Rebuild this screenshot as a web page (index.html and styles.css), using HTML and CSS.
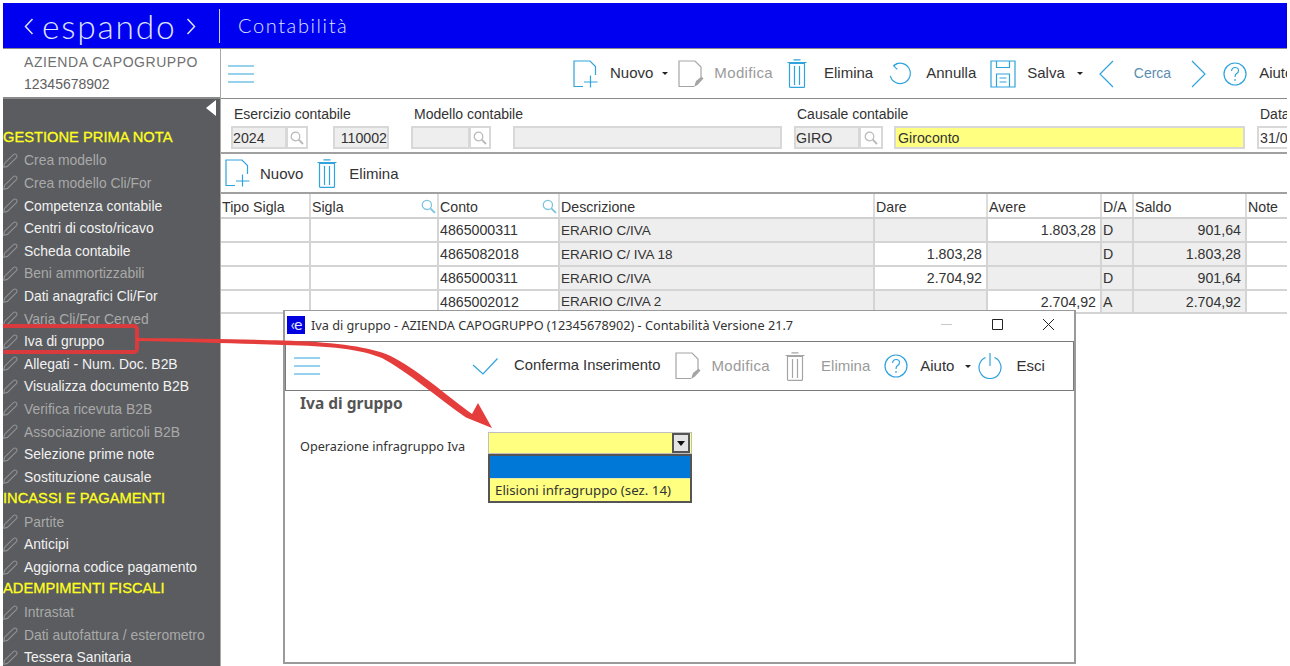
FILE: index.html
```html
<!DOCTYPE html>
<html lang="it">
<head>
<meta charset="utf-8">
<title>Contabilità</title>
<link rel="stylesheet" href="styles.css">
</head>
<body>
<svg class="defs" width="0" height="0">
  <symbol id="i-pencil" viewBox="0 0 15 15"><path d="M.8 14.2 L1.4 10.4 L10.4 1.6 Q12 .4 13.4 1.6 Q14.6 3 13.4 4.6 L4.4 13.4 Z" fill="none" stroke="currentColor" stroke-width="1.1"/></symbol>
  <symbol id="i-new" viewBox="0 0 26 28"><path d="M10 26.5 H1 V1 H17 L22.5 6.5 V15" fill="none" stroke="currentColor" stroke-width="1.2"/><path d="M17.5 15.5 V27.5 M11 22 H24.5" fill="none" stroke="currentColor" stroke-width="1.2"/></symbol>
  <symbol id="i-edit" viewBox="0 0 26 28"><path d="M16 26.5 H1 V1 H17 L23 7 V17" fill="none" stroke="currentColor" stroke-width="1.2"/><path d="M16 27 L18 21 L23.5 16.5 L25.5 18.5 L20 24.5 Z" fill="currentColor"/></symbol>
  <symbol id="i-trash" viewBox="0 0 20 29"><path d="M2.5 4.5 H17.5 V27.5 Q17.5 28.4 16.5 28.4 H3.5 Q2.5 28.4 2.5 27.5 Z M7.5 7 V26 M12.5 7 V26 M.5 3.5 H19.5 M6.5 .8 H13.5" fill="none" stroke="currentColor" stroke-width="1.2"/></symbol>
  <symbol id="i-undo" viewBox="0 0 26 26"><path d="M6 4 A11 11 0 1 1 2.5 15" fill="none" stroke="currentColor" stroke-width="1.3"/><path d="M6 4 L11 1 M6 4 L10 8" fill="none" stroke="currentColor" stroke-width="1.3"/></symbol>
  <symbol id="i-save" viewBox="0 0 26 28"><path d="M1 1 H25 V27 H1 Z M6.5 1 V7.5 H19.5 V1 M6.5 27 V14 H19.5 V27 M9.5 18 H16.5 M9.5 22 H16.5" fill="none" stroke="currentColor" stroke-width="1.2"/></symbol>
  <symbol id="i-prev" viewBox="0 0 18 28"><path d="M16 1 L3 14 L16 27" fill="none" stroke="currentColor" stroke-width="1.2"/></symbol>
  <symbol id="i-next" viewBox="0 0 18 28"><path d="M3 1 L16 14 L3 27" fill="none" stroke="currentColor" stroke-width="1.2"/></symbol>
  <symbol id="i-help" viewBox="0 0 24 24"><circle cx="12" cy="12" r="11" fill="none" stroke="currentColor" stroke-width="1.2"/><path d="M8.5 9 Q9 5.5 12 5.5 Q15.5 5.5 15.5 8.5 Q15.5 10.5 13.5 11.5 Q12 12.5 12 15" fill="none" stroke="currentColor" stroke-width="1.2"/><path d="M12 17 V19" stroke="currentColor" stroke-width="1.2"/></symbol>
  <symbol id="i-power" viewBox="0 0 24 26"><path d="M7.5 4.5 A11 11 0 1 0 16.5 4.5" fill="none" stroke="currentColor" stroke-width="1.2"/><path d="M12 0 V13" stroke="currentColor" stroke-width="1.2"/></symbol>
  <symbol id="i-check" viewBox="0 0 26 17"><path d="M1 7 L11 16 L25.5 .5" fill="none" stroke="currentColor" stroke-width="1.2"/></symbol>
  <symbol id="i-menu" viewBox="0 0 26 18"><path d="M0 1 H26 M0 9 H26 M0 17 H26" stroke="currentColor" stroke-width="1.1"/></symbol>
  <symbol id="i-search" viewBox="0 0 14 14"><circle cx="5.5" cy="5.5" r="4.3" fill="none" stroke="currentColor" stroke-width="1.2"/><path d="M8.7 8.7 L13 13" stroke="currentColor" stroke-width="1.8"/></symbol>
  <symbol id="i-logo-l" viewBox="0 0 10 17"><path d="M8.5 1 L1.5 8.5 L8.5 16" fill="none" stroke="currentColor" stroke-width="1.5"/></symbol>
  <symbol id="i-logo-r" viewBox="0 0 10 17"><path d="M1.5 1 L8.5 8.5 L1.5 16" fill="none" stroke="currentColor" stroke-width="1.5"/></symbol>
</svg>

<div class="app">
  <header class="topbar">
    <div class="brand"><svg class="chev"><use href="#i-logo-l"/></svg><span class="word">espando</span><svg class="chev"><use href="#i-logo-r"/></svg></div>
    <div class="module">Contabilità</div>
  </header>

  <div class="workspace">
    <aside class="side">
      <div class="company">
        <div class="company-name">AZIENDA CAPOGRUPPO</div>
        <div class="company-id">12345678902</div>
      </div>
      <nav class="menu">
        <span class="collapse"></span>
        <div class="menu-head">GESTIONE PRIMA NOTA</div>
        <a class="item off"><svg class="pen"><use href="#i-pencil"/></svg>Crea modello</a>
        <a class="item off"><svg class="pen"><use href="#i-pencil"/></svg>Crea modello Cli/For</a>
        <a class="item"><svg class="pen"><use href="#i-pencil"/></svg>Competenza contabile</a>
        <a class="item"><svg class="pen"><use href="#i-pencil"/></svg>Centri di costo/ricavo</a>
        <a class="item"><svg class="pen"><use href="#i-pencil"/></svg>Scheda contabile</a>
        <a class="item off"><svg class="pen"><use href="#i-pencil"/></svg>Beni ammortizzabili</a>
        <a class="item"><svg class="pen"><use href="#i-pencil"/></svg>Dati anagrafici Cli/For</a>
        <a class="item off"><svg class="pen"><use href="#i-pencil"/></svg>Varia Cli/For Cerved</a>
        <a class="item"><svg class="pen"><use href="#i-pencil"/></svg>Iva di gruppo</a>
        <a class="item"><svg class="pen"><use href="#i-pencil"/></svg>Allegati - Num. Doc. B2B</a>
        <a class="item"><svg class="pen"><use href="#i-pencil"/></svg>Visualizza documento B2B</a>
        <a class="item off"><svg class="pen"><use href="#i-pencil"/></svg>Verifica ricevuta B2B</a>
        <a class="item off"><svg class="pen"><use href="#i-pencil"/></svg>Associazione articoli B2B</a>
        <a class="item"><svg class="pen"><use href="#i-pencil"/></svg>Selezione prime note</a>
        <a class="item"><svg class="pen"><use href="#i-pencil"/></svg>Sostituzione causale</a>
        <div class="menu-head">INCASSI E PAGAMENTI</div>
        <a class="item off"><svg class="pen"><use href="#i-pencil"/></svg>Partite</a>
        <a class="item"><svg class="pen"><use href="#i-pencil"/></svg>Anticipi</a>
        <a class="item"><svg class="pen"><use href="#i-pencil"/></svg>Aggiorna codice pagamento</a>
        <div class="menu-head">ADEMPIMENTI FISCALI</div>
        <a class="item off"><svg class="pen"><use href="#i-pencil"/></svg>Intrastat</a>
        <a class="item off"><svg class="pen"><use href="#i-pencil"/></svg>Dati autofattura / esterometro</a>
        <a class="item"><svg class="pen"><use href="#i-pencil"/></svg>Tessera Sanitaria</a>
      </nav>
    </aside>

    <main class="main">
      <div class="toolbar">
        <svg class="ic ic-menu"><use href="#i-menu"/></svg>
        <div class="tools">
          <svg class="ic ic-new"><use href="#i-new"/></svg><span class="t t-nuovo">Nuovo</span><span class="caret"></span>
          <svg class="ic ic-edit dis"><use href="#i-edit"/></svg><span class="t t-mod dis">Modifica</span>
          <svg class="ic ic-trash"><use href="#i-trash"/></svg><span class="t t-eli">Elimina</span>
          <svg class="ic ic-undo"><use href="#i-undo"/></svg><span class="t t-ann">Annulla</span>
          <svg class="ic ic-save"><use href="#i-save"/></svg><span class="t t-sal">Salva</span><span class="caret caret-wide"></span>
          <svg class="ic ic-prev"><use href="#i-prev"/></svg><span class="t t-cerca">Cerca</span>
          <svg class="ic ic-next"><use href="#i-next"/></svg>
          <svg class="ic ic-help"><use href="#i-help"/></svg><span class="t t-aiuto">Aiuto</span>
        </div>
      </div>

      <div class="form">
        <div class="group g1">
          <label class="lbl">Esercizio contabile</label>
          <div class="fields">
            <span class="inp w56">2024</span><span class="srch"><svg class="mag"><use href="#i-search"/></svg></span>
            <span class="inp w56 right ml25">110002</span>
          </div>
        </div>
        <div class="group g2">
          <label class="lbl">Modello contabile</label>
          <div class="fields">
            <span class="inp w59"></span><span class="srch"><svg class="mag"><use href="#i-search"/></svg></span>
            <span class="inp grow ml22"></span>
          </div>
        </div>
        <div class="group g3">
          <label class="lbl">Causale contabile</label>
          <div class="fields">
            <span class="inp w66">GIRO</span><span class="srch w23"><svg class="mag"><use href="#i-search"/></svg></span>
            <span class="inp grow yellow ml11">Giroconto</span>
          </div>
        </div>
        <div class="group g4">
          <label class="lbl">Data</label>
          <div class="fields"><span class="inp white w80">31/01/2024</span></div>
        </div>
      </div>

      <div class="subbar">
        <svg class="ic ic-new sub-new"><use href="#i-new"/></svg><span class="st st-nuovo">Nuovo</span>
        <svg class="ic ic-trash sub-trash"><use href="#i-trash"/></svg><span class="st">Elimina</span>
      </div>

      <table class="grid">
        <colgroup>
          <col class="c1"><col class="c2"><col class="c3"><col class="c4"><col class="c5"><col class="c6"><col class="c7"><col class="c8"><col class="c9">
        </colgroup>
        <thead>
          <tr><th>Tipo Sigla</th><th>Sigla<svg class="hmag"><use href="#i-search"/></svg></th><th>Conto<svg class="hmag"><use href="#i-search"/></svg></th><th>Descrizione</th><th>Dare</th><th>Avere</th><th>D/A</th><th>Saldo</th><th>Note</th></tr>
        </thead>
        <tbody>
          <tr><td></td><td></td><td>4865000311</td><td class="g desc">ERARIO C/IVA</td><td class="g"></td><td class="n">1.803,28</td><td class="g">D</td><td class="g n">901,64</td><td></td></tr>
          <tr><td></td><td></td><td>4865082018</td><td class="g desc">ERARIO C/ IVA 18</td><td class="n">1.803,28</td><td class="g"></td><td class="g">D</td><td class="g n">1.803,28</td><td></td></tr>
          <tr><td></td><td></td><td>4865000311</td><td class="g desc">ERARIO C/IVA</td><td class="n">2.704,92</td><td class="g"></td><td class="g">D</td><td class="g n">901,64</td><td></td></tr>
          <tr class="last"><td></td><td></td><td>4865002012</td><td class="g desc">ERARIO C/IVA 2</td><td class="g"></td><td class="n">2.704,92</td><td class="g">A</td><td class="g n">2.704,92</td><td></td></tr>
        </tbody>
      </table>
    </main>
  </div>
</div>

<section class="dialog">
  <div class="titlebar">
    <span class="appicon">‹e</span>
    <span class="wintitle">Iva di gruppo - AZIENDA CAPOGRUPPO (12345678902) - Contabilità Versione 21.7</span>
    <span class="winbtns">
      <svg class="wb"><path d="M1 6.5 H12" stroke="#c8c8c8"/></svg>
      <svg class="wb"><path d="M1.5 1.5 H11.5 V11.5 H1.5 Z" fill="none" stroke="#222"/></svg>
      <svg class="wb"><path d="M1 1 L12 12 M12 1 L1 12" stroke="#222" fill="none"/></svg>
    </span>
  </div>
  <div class="dtoolbar">
    <svg class="ic ic-menu dmenu"><use href="#i-menu"/></svg>
    <svg class="ic ic-check"><use href="#i-check"/></svg><span class="t d-conf">Conferma Inserimento</span>
    <svg class="ic ic-edit dis d-edit"><use href="#i-edit"/></svg><span class="t t-mod dis">Modifica</span>
    <svg class="ic ic-trash dis d-trash"><use href="#i-trash"/></svg><span class="t d-eli dis">Elimina</span>
    <svg class="ic ic-help d-help"><use href="#i-help"/></svg><span class="t d-aiuto">Aiuto</span><span class="caret d-caret"></span>
    <svg class="ic ic-power"><use href="#i-power"/></svg><span class="t d-esci">Esci</span>
  </div>
  <div class="dbody">
    <h2 class="dhead">Iva di gruppo</h2>
    <div class="drow">
      <label class="dlbl">Operazione infragruppo Iva</label>
      <div class="combo">
        <div class="combo-box"><span class="combo-btn"><span class="combo-arrow"></span></span></div>
        <div class="combo-list">
          <div class="opt-sel"></div>
          <div class="opt">Elisioni infragruppo (sez. 14)</div>
        </div>
      </div>
    </div>
  </div>
</section>

<div class="callout"></div>
<svg class="arrow" viewBox="0 0 1287 666">
  <path d="M136 338 C200 338.5 250 339.5 283 340.5 C330 342 365 346 386 354 C410 364 440 390 472 414 L478 403 L492 428 L466 417.5 C438 398 408 372 382 358 C360 349 330 346 283 345 C250 344 200 342 136 341 Z" fill="#e53c3c"/>
</svg>
</body>
</html>
```
FILE: styles.css
```css
* { box-sizing: border-box; }
html, body { margin: 0; height: 100%; background: #fff; overflow: hidden; }
body { font-family: "Liberation Sans", Arial, sans-serif; font-size: 13.5px; color: #333; width: 1290px; height: 666px; position: relative; }
.defs { position: absolute; }

.app { display: flex; flex-direction: column; height: 666px; padding: 3px 0 0 3px; width: 1287px; overflow: hidden; }
.topbar { height: 45px; background: #0000f0; display: flex; align-items: center; flex: none; }
.brand { width: 216px; display: flex; align-items: center; padding-left: 21px; color: #dde4ff; font-family: Lato, sans-serif; font-weight: 300; height: 34px; white-space: nowrap; }
.chev { width: 10px; height: 17px; flex: none; color: #dde4ff; margin-top: 1px; }
.word { font-size: 33.5px; line-height: 40px; letter-spacing: 1.8px; margin: 0 9px 0 8px; }
.module { border-left: 1px solid #c8d0ff; height: 34px; line-height: 32px; padding-left: 18px; color: #dde4ff; font-family: Lato, sans-serif; font-weight: 300; font-size: 20px; letter-spacing: 1.6px; white-space: nowrap; }

.workspace { display: flex; flex: 1; min-height: 0; border-top: 1px solid #8a8a8a; }
.side { width: 217px; flex: none; display: flex; flex-direction: column; }
.company { height: 50px; padding: 2px 0 0 21px; border-bottom: 2px solid #8a8a8a; flex: none; line-height: 22px; }
.company-name { color: #707070; font-size: 14px; letter-spacing: .55px; white-space: nowrap; }
.company-id { color: #606060; font-size: 14px; }
.menu { flex: 1; background: #5a5c5f; padding-top: 26.5px; position: relative; overflow: hidden; }
.collapse { position: absolute; right: 4px; top: 1px; border-style: solid; border-width: 8px 10px 8px 0; border-color: transparent #fff transparent transparent; }
.menu-head { height: 22.6px; line-height: 22.6px; color: #ffff20; font-size: 14.7px; -webkit-text-stroke: .3px #ffff20; white-space: nowrap; }
.item { display: flex; align-items: center; height: 22.6px; padding-top: 2px; color: #f2f2f2; font-size: 13.9px; white-space: nowrap; }
.item.off { color: #a9a9a9; }
.pen { width: 15px; height: 15px; margin-right: 6px; color: #8f9193; flex: none; }

.main { flex: 1; min-width: 0; display: flex; flex-direction: column; border-left: 1px solid #a8a8a8; }
.toolbar { height: 50px; border-bottom: 1px solid #8a8a8a; display: flex; align-items: center; flex: none; padding-left: 7px; white-space: nowrap; }
.tools { display: flex; align-items: center; margin-left: 319px; flex: none; }
.ic { color: #2ea3dc; flex: none; display: block; }
.ic.dis { color: #a5a5a5; }
.t { color: #333; font-size: 15px; flex: none; margin-bottom: 2px; }
.t.dis { color: #9a9a9a; }
.ic-menu { width: 26px; height: 18px; }
.ic-new { width: 26px; height: 28px; }
.ic-edit { width: 26px; height: 28px; margin-left: 10px; }
.ic-trash { width: 20px; height: 29px; margin-left: 14px; }
.ic-undo { width: 24px; height: 24px; margin-left: 15px; }
.ic-save { width: 26px; height: 28px; margin-left: 14px; }
.ic-prev, .ic-next { width: 18px; height: 28px; }
.ic-help { width: 24px; height: 24px; margin-left: 16px; }
.ic-power { width: 24px; height: 26px; margin-left: 7px; }
.ic-check { width: 26px; height: 17px; margin-left: 152px; }
.caret { width: 0; height: 0; border-style: solid; border-width: 3px 3px 0; border-color: #222 transparent transparent; margin-left: 9px; flex: none; }
.caret-wide { margin-left: 12px; }
.t-nuovo { margin-left: 11px; }
.t-mod { margin-left: 10px; letter-spacing: .35px; }
.t-eli { margin-left: 17px; }
.t-ann { margin-left: 14px; }
.t-sal { margin-left: 11px; }
.ic-prev { margin-left: 14px; }
.t-cerca { margin-left: 19px; font-size: 14px; color: #5a8db0; }
.ic-next { margin-left: 18px; }
.t-aiuto { margin-left: 12px; }

.form { height: 55px; border-bottom: 2px solid #a0a0a0; display: flex; padding: 7px 0 0 10px; gap: 12px; flex: none; white-space: nowrap; }
.group { display: flex; flex-direction: column; flex: none; }
.g1 { width: 168px; }
.g2 { width: 371px; }
.g3 { width: 451px; }
.g4 { width: 100px; }
.lbl { font-size: 14px; color: #333; padding-left: 3px; height: 20px; line-height: 16px; }
.fields { display: flex; height: 23px; }
.inp { display: block; height: 23px; line-height: 20px; background: #eeeeee; border: 2px solid #d8d8d8; font-size: 14.2px; padding-left: 0; color: #333; flex: none; overflow: hidden; }
.srch { display: flex; align-items: center; justify-content: center; width: 21px; height: 23px; border: 2px solid #d8d8d8; border-left-width: 1px; background: #fff; flex: none; }
.mag { width: 14px; height: 14px; color: #b8b8b8; }
.w56 { width: 56px; }
.w59 { width: 59px; }
.w66 { width: 66px; }
.w23 { width: 23px; }
.w80 { width: 80px; }
.right { text-align: right; padding-right: 0; }
.ml25 { margin-left: 25px; }
.ml22 { margin-left: 22px; }
.ml11 { margin-left: 11px; }
.grow { flex: 1; }
.yellow { background: #ffff80; padding-left: 2px; }
.white { background: #fff; padding-left: 1px; }

.subbar { height: 40px; border-bottom: 2px solid #a0a0a0; display: flex; align-items: center; padding-left: 4px; flex: none; }
.st { font-size: 15px; color: #333; }
.st-nuovo { margin-left: 9px; }
.sub-trash { margin-left: 14px; margin-right: 12px; }

.grid { border-collapse: collapse; table-layout: fixed; width: 1071px; flex: none; }
.c1 { width: 89px; } .c2 { width: 128px; } .c3 { width: 121px; } .c4 { width: 315px; } .c5 { width: 113px; } .c6 { width: 114px; } .c7 { width: 32px; } .c8 { width: 113px; } .c9 { width: 46px; }
.grid th { height: 24px; font-weight: 400; font-size: 14.2px; text-align: left; padding: 2px 1px 0; border-right: 2px solid #dcdcdc; border-bottom: 2px solid #d0d0d0; color: #333; position: relative; }
.grid td { height: 24px; padding: 0 1px; font-size: 14.2px; border-right: 2px solid #d4d4d4; border-bottom: 2px solid #d4d4d4; color: #333; white-space: nowrap; }
.grid .last td { height: 23px; }
.grid td.g { background: #eeeeee; }
.grid td.desc { font-size: 13.5px; }
.grid td.n { text-align: right; padding-right: 4px; }
.hmag { position: absolute; right: 1px; top: 5px; width: 15px; height: 15px; color: #7cc4de; }

.dialog { position: absolute; left: 283px; top: 310px; width: 793px; height: 354px; background: #fff; border: 1px solid #9a9a9a; border-width: 1px 2px 2px 2px; display: flex; flex-direction: column; }
.titlebar { height: 30px; padding: 0 0 3px 2px; display: flex; align-items: center; flex: none; }
.appicon { width: 18px; height: 18px; background: #0000e0; color: #e4e8ff; font-family: Lato, sans-serif; font-size: 16px; line-height: 16px; text-align: center; letter-spacing: -1px; flex: none; }
.wintitle { margin-left: 6px; font-family: "Noto Sans", sans-serif; font-size: 12.7px; color: #333; white-space: nowrap; }
.winbtns { margin-left: auto; display: flex; gap: 38px; padding-right: 19px; align-items: center; }
.wb { width: 13px; height: 13px; display: block; }
.dtoolbar { height: 50px; border: 1px solid #7a7a7a; display: flex; align-items: center; padding-left: 8px; flex: none; white-space: nowrap; }
.d-conf { margin-left: 16px; font-size: 14.8px; }
.d-edit { margin-left: 15px; }
.d-trash { margin-left: 15px; }
.d-eli { margin-left: 16px; }
.d-help { margin-left: 14px; }
.d-aiuto { margin-left: 12px; }
.d-caret { margin-left: 11px; }
.d-esci { margin-left: 14px; }
.dbody { padding: 2px 0 0 15px; flex: 1; }
.dhead { margin: 0; font-family: "Noto Sans", sans-serif; font-size: 15.5px; font-weight: 700; color: #555; line-height: 20px; }
.drow { display: flex; margin-top: 19px; align-items: flex-start; }
.dlbl { width: 188px; font-family: "Noto Sans", sans-serif; font-size: 12.7px; color: #333; line-height: 22px; margin-top: 3px; white-space: nowrap; flex: none; }
.combo { position: relative; width: 204px; }
.combo-box { height: 22px; background: #ffff80; border: 1px solid #c0c0c0; display: flex; justify-content: flex-end; padding-right: 1px; }
.combo-btn { width: 18px; height: 20px; background: #e4e4e4; border: 2px solid #555; display: flex; align-items: center; justify-content: center; }
.combo-arrow { width: 0; height: 0; border-style: solid; border-width: 5px 4px 0; border-color: #111 transparent transparent; }
.combo-list { position: absolute; left: 0; top: 22px; width: 204px; height: 49px; border: 2px solid #555; background: #ffff80; }
.opt-sel { height: 22px; background: #0078d7; }
.opt { height: 23px; line-height: 22px; padding-left: 5px; font-family: "Noto Sans", sans-serif; font-size: 13.3px; color: #333; border-top: 1px solid #e8e8a0; white-space: nowrap; }

.callout { position: absolute; left: 3px; top: 324px; width: 136px; height: 30px; border: 4px solid #d93a3e; border-left: 0; border-radius: 0 5px 5px 0; }
.arrow { position: absolute; left: 0; top: 0; width: 1287px; height: 666px; pointer-events: none; }
```
